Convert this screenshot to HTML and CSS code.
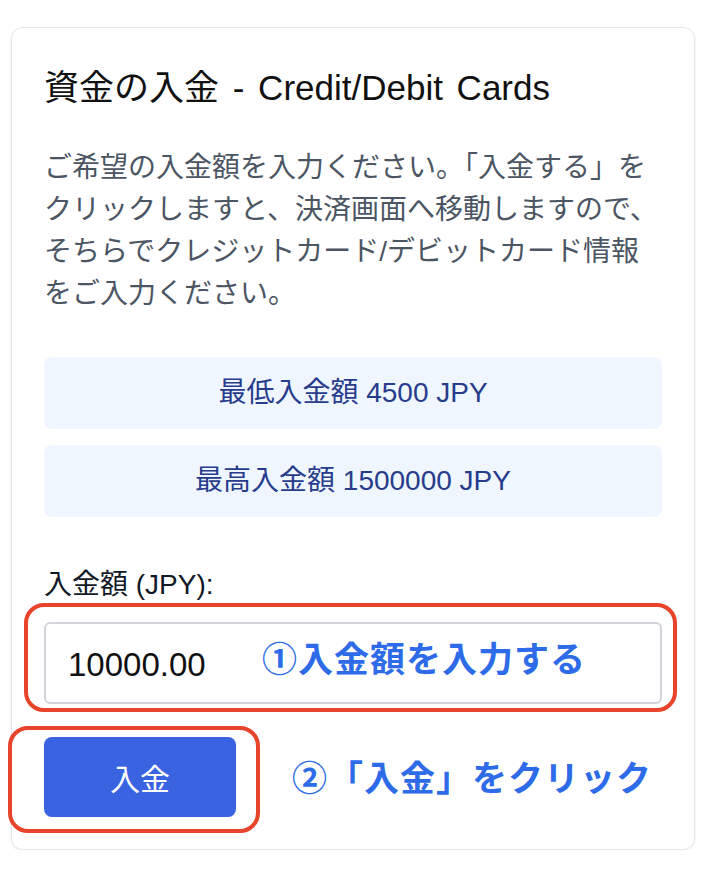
FILE: index.html
```html
<!DOCTYPE html>
<html lang="ja">
<head>
<meta charset="utf-8">
<title>資金の入金</title>
<link rel="stylesheet" href="styles.css">
</head>
<body>
<div class="card">
  <h2 class="title">資金の入金 - Credit/Debit Cards</h2>
  <p class="desc">ご希望の入金額を入力ください。「入金する」をクリックしますと、決済画面へ移動しますので、そちらでクレジットカード/デビットカード情報をご入力ください。</p>
  <div class="limits">
    <div class="limit">最低入金額 4500 JPY</div>
    <div class="limit">最高入金額 1500000 JPY</div>
  </div>
  <label class="label" for="amount">入金額 (JPY):</label>
  <div class="field">
    <input class="input" id="amount" type="text" value="10000.00">
    <span class="callout callout-input">①入金額を入力する</span>
    <span class="ring ring-input"></span>
  </div>
  <div class="actions">
    <div class="btn-wrap">
      <button class="btn" type="button">入金</button>
      <span class="ring ring-btn"></span>
    </div>
    <span class="callout callout-btn">②「入金」をクリック</span>
  </div>
</div>
</body>
</html>
```

FILE: styles.css
```css
* { box-sizing: border-box; }

html, body {
  margin: 0;
  padding: 0;
  background: #ffffff;
}

body {
  font-family: "Liberation Sans", "Noto Sans CJK JP", sans-serif;
  color: #111827;
}

.card {
  margin: 27px 0 0 11px;
  width: 684px;
  border: 1px solid #e5e7eb;
  border-radius: 12px;
  box-shadow: 0 1px 3px rgba(0, 0, 0, 0.08);
  padding: 35px 32px 32px 32px;
  background: #ffffff;
}

.title {
  margin: 0 0 35px 0;
  font-size: 35px;
  line-height: 49px;
  font-weight: 400;
  word-spacing: 4px;
  color: #111111;
}

.desc {
  margin: 0 0 42px 0;
  font-size: 28px;
  line-height: 42px;
  color: #4b5563;
}

.limits {
  display: flex;
  flex-direction: column;
  gap: 16px;
}

.limit {
  background: #eff6ff;
  border-radius: 8px;
  padding: 15px 0;
  font-size: 28px;
  line-height: 42px;
  text-align: center;
  color: #283c8c;
}

.label {
  display: block;
  margin: 47px 0 16px 0;
  font-size: 28px;
  line-height: 42px;
  color: #111827;
}

.field {
  position: relative;
}

.input {
  display: block;
  width: 100%;
  height: 82px;
  border: 2px solid #d1d5db;
  border-radius: 6px;
  padding: 4px 22px 0 22px;
  font-family: "Liberation Sans", "Noto Sans CJK JP", sans-serif;
  font-size: 33px;
  color: #111111;
  background: #ffffff;
  outline: none;
}

.callout {
  font-size: 35px;
  line-height: 40px;
  font-weight: 700;
  letter-spacing: 1px;
  color: #2d6be8;
  white-space: nowrap;
}

.callout-input {
  position: absolute;
  left: 218px;
  top: 18px;
}

.ring {
  position: absolute;
  border: 4px solid #e8432b;
  border-radius: 20px;
  pointer-events: none;
}

.ring-input {
  left: -20px;
  top: -19px;
  right: -15px;
  bottom: -8px;
}

.actions {
  margin-top: 33px;
  display: flex;
  align-items: center;
  gap: 56px;
}

.btn-wrap {
  position: relative;
}

.btn {
  display: block;
  width: 192px;
  height: 80px;
  border: none;
  border-radius: 8px;
  background: #3a63e1;
  color: #ffffff;
  font-family: "Liberation Sans", "Noto Sans CJK JP", sans-serif;
  font-size: 30px;
  padding: 0;
}

.ring-btn {
  left: -36px;
  top: -11px;
  right: -24px;
  bottom: -16px;
}

.callout-btn {
  margin-top: 4px;
}
```
